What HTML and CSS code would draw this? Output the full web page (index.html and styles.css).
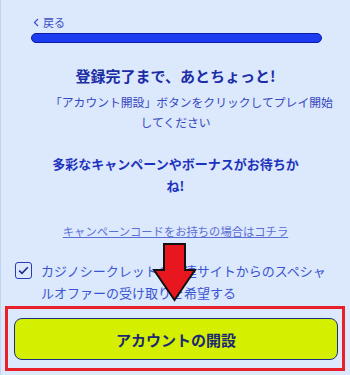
FILE: index.html
```html
<!DOCTYPE html>
<html lang="ja">
<head>
<meta charset="utf-8">
<link rel="stylesheet" href="styles.css">
</head>
<body>
<div class="page">
  <div class="back">
    <svg class="chev" width="6" height="9" viewBox="0 0 6 9"><path d="M5 1 L1.5 4.5 L5 8" fill="none" stroke="#3a4fc8" stroke-width="1.2"/></svg>
    <span>戻る</span>
  </div>
  <div class="progress"></div>
  <h1 class="title">登録完了まで、あとちょっと!</h1>
  <p class="sub"><span class="sub-first">「アカウント開設」ボタンをクリックしてプレイ開始</span><span class="sub-second">してください</span></p>
  <p class="promo">多彩なキャンペーンやボーナスがお待ちか<br>ね!</p>
  <p class="linkrow"><a class="link" href="#">キャンペーンコードをお持ちの場合はコチラ</a></p>
  <div class="check-row">
    <span class="box">
      <svg width="11" height="9" viewBox="0 0 11 9"><path d="M1.2 4.6 L4 7.3 L9.8 1.3" fill="none" stroke="#1b2a90" stroke-width="1.6"/></svg>
    </span>
    <span class="check-text">カジノシークレットの関連サイトからのスペシャルオファーの受け取りを希望する</span>
  </div>
  <div class="cta">
    <button class="btn">アカウントの開設</button>
  </div>
  <svg class="arrow" width="48" height="62" viewBox="0 0 48 62">
    <path d="M13 2 H34 V28 H44 L23.5 58 L3 28 H13 Z" fill="#e8161f" stroke="#111" stroke-width="2" stroke-linejoin="miter"/>
  </svg>
</div>
</body>
</html>
```
FILE: styles.css
```css
html, body {
  margin: 0;
  padding: 0;
}
body {
  background: #dce8fc;
  font-family: "Noto Sans CJK JP", "Noto Sans", sans-serif;
}
.page {
  position: relative;
  width: 350px;
  height: 375px;
  box-sizing: border-box;
  border-left: 1px solid #c2d4f4;
  overflow: hidden;
}
.back {
  display: flex;
  align-items: center;
  gap: 4px;
  margin: 15px 0 0 32px;
  height: 14px;
  font-size: 11px;
  line-height: 14px;
  color: #3a4fc8;
}
.progress {
  margin: 4px 28px 0 30px;
  height: 10px;
  box-sizing: border-box;
  background: #1c3cf2;
  border: 1px solid #0d1ca0;
  border-radius: 5px;
}
.title {
  margin: 22px 0 0;
  font-size: 15px;
  line-height: 22px;
  font-weight: 700;
  text-align: center;
  color: #1b2ea6;
}
.sub {
  margin: 5px 0 0;
  font-size: 11.8px;
  line-height: 20px;
  color: #3447bf;
}
.sub-first {
  display: block;
  padding-left: 49px;
  white-space: nowrap;
}
.sub-second {
  display: block;
  text-align: center;
}
.promo {
  margin: 21px 0 0;
  font-size: 13px;
  line-height: 22px;
  font-weight: 700;
  text-align: center;
  color: #1d33bd;
}
.linkrow {
  margin: 26px 0 0;
  font-size: 11.3px;
  line-height: 16px;
  text-align: center;
}
.link {
  color: #5a6fd6;
  text-decoration: underline;
}
.check-row {
  display: flex;
  align-items: flex-start;
  gap: 9px;
  margin: 21px 16px 0 14px;
}
.box {
  flex: none;
  width: 17px;
  height: 17px;
  margin-top: 2px;
  box-sizing: border-box;
  border: 1.5px solid #2a3cb4;
  border-radius: 3px;
  display: flex;
  align-items: center;
  justify-content: center;
}
.check-text {
  font-size: 13px;
  line-height: 22px;
  color: #3a55d2;
}
.cta {
  margin: 2px 5px 0 4px;
  border: 3px solid #e8202a;
  padding: 9px 4px 8px 6px;
}
.btn {
  display: block;
  width: 100%;
  height: 42px;
  background: #d4f000;
  border: 1px solid #1a2f8c;
  border-radius: 8px;
  font-family: "Noto Sans CJK JP", "Noto Sans", sans-serif;
  font-size: 15px;
  font-weight: 700;
  color: #1c2a72;
  cursor: pointer;
}
.arrow {
  position: absolute;
  left: 150px;
  top: 242px;
}
```
